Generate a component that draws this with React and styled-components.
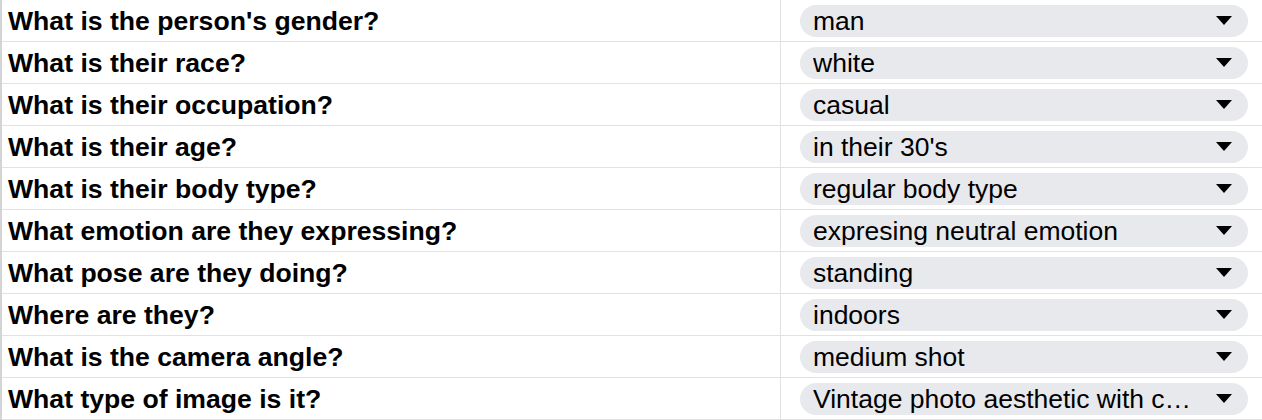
import React from "react";
import styled, { createGlobalStyle } from "styled-components";

const Global = createGlobalStyle`
  html, body { margin: 0; padding: 0; background: #ffffff; }
  body { font-family: "Liberation Sans", Arial, Helvetica, sans-serif; overflow: hidden; }
`;

const Sheet = styled.div`
  width: 1262px;
  height: 420px;
  overflow: hidden;
  border-left: 2px solid #d4d4d4;
  box-sizing: border-box;
  display: flex;
  flex-direction: column;
`;

const Row = styled.div`
  display: grid;
  grid-template-columns: 779px 1fr;
  height: 42px;
  flex: 0 0 42px;
  box-sizing: border-box;
  border-bottom: 1px solid #e2e2e2;
`;

const Question = styled.div`
  display: flex;
  align-items: center;
  padding: 1px 0 0 6px;
  border-right: 1px solid #e2e2e2;
  font-weight: 700;
  font-size: 26.6px;
  color: #000;
  white-space: nowrap;
  overflow: hidden;
`;

const Cell = styled.div`
  display: flex;
  align-items: center;
  padding: 0 14px 0 19px;
`;

const Chip = styled.div`
  flex: 1;
  height: 32px;
  border-radius: 16px;
  background: #e8e9ec;
  display: flex;
  align-items: center;
  padding: 0 16px 0 13px;
  box-sizing: border-box;
  min-width: 0;
`;

const Value = styled.span`
  flex: 1;
  font-size: 26.5px;
  padding-top: 1px;
  color: #000;
  white-space: nowrap;
  overflow: hidden;
`;

const Arrow = () => (
  <svg width="16" height="9" viewBox="0 0 16 9" style={{ flex: "0 0 auto" }}>
    <path d="M0 0 L16 0 L8 9 Z" fill="#000" />
  </svg>
);

const rows = [
  ["What is the person's gender?", "man"],
  ["What is their race?", "white"],
  ["What is their occupation?", "casual"],
  ["What is their age?", "in their 30's"],
  ["What is their body type?", "regular body type"],
  ["What emotion are they expressing?", "expresing neutral emotion"],
  ["What pose are they doing?", "standing"],
  ["Where are they?", "indoors"],
  ["What is the camera angle?", "medium shot"],
  ["What type of image is it?", "Vintage photo aesthetic with c…"],
];

export default function App() {
  return (
    <>
      <Global />
      <Sheet>
        {rows.map(([q, v]) => (
          <Row key={q}>
            <Question>{q}</Question>
            <Cell>
              <Chip>
                <Value>{v}</Value>
                <Arrow />
              </Chip>
            </Cell>
          </Row>
        ))}
      </Sheet>
    </>
  );
}
